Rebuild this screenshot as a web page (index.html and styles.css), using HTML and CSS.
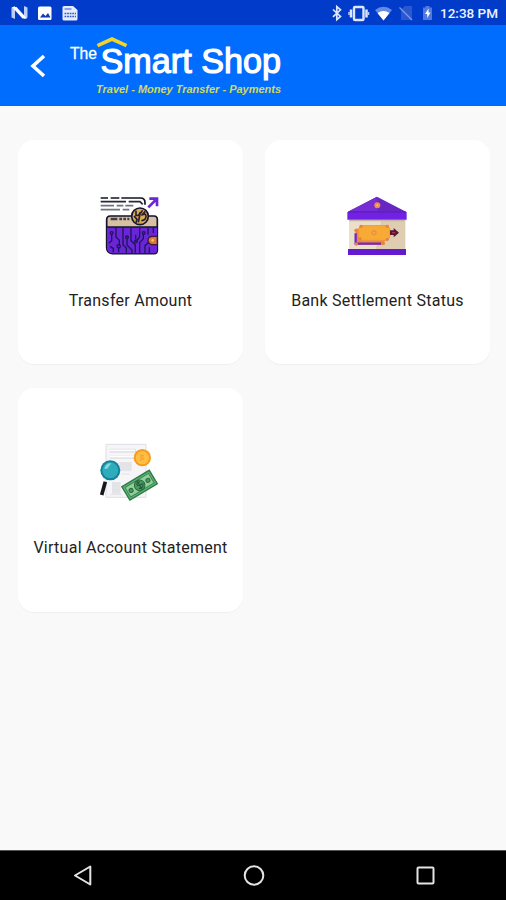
FILE: index.html
```html
<!DOCTYPE html>
<html lang="en">
<head>
<meta charset="utf-8">
<meta name="viewport" content="width=device-width, initial-scale=1">
<title>The Smart Shop</title>
<link rel="stylesheet" href="styles.css">
</head>
<body>
<div class="screen">
  <div class="status">
    <svg class="status-icons" width="80" height="25" viewBox="0 0 80 25">
      <path d="M11.500 7.500l3.500-1.500v13l-3.500-1.500zM24 6l3.500 1.500v10L24 19z" fill="#bccdf8"/>
      <path d="M12 7h4.500L27 18.500h-4.500z" fill="#fff"/>
      <rect x="38" y="6.500" width="13.500" height="13.500" rx="1.500" fill="#fff"/>
      <path d="M40 17.500l3-4 2.500 2.500 2.500-3 2.500 4.500z" fill="#123bb8"/>
      <path d="M64 6h9l4.500 4v9q0 1.500-1.500 1.500H64q-1.500 0-1.500-1.500V7.500Q62.500 6 64 6z" fill="#e4edff"/>
      <path d="M64.500 9h7" stroke="#3558c8" stroke-width="1"/>
      <path d="M64.500 13.500h11.500M64.500 16.500h11.500" stroke="#3558c8" stroke-width="1.500" stroke-dasharray="1.800 .8"/>
    </svg>
    <div class="status-right">
      <svg width="106" height="25" viewBox="330 0 106 25">
        <path d="M333 9.500l7.500 7-3.700 3.200V6.600l3.700 3.200-7.500 7" fill="none" stroke="#dce7ff" stroke-width="1.700"/>
        <rect x="354" y="7" width="9.500" height="13" rx="1" fill="none" stroke="#dce7ff" stroke-width="2.400"/>
        <path d="M351 9.500v8M366.500 9.500v8" stroke="#dce7ff" stroke-width="2.500"/>
        <path d="M349 12v3M368.500 12v3" stroke="#b6caff" stroke-width="1.500"/>
        <path d="M375 10q8.500-6.500 17 0l-8.500 10.500z" fill="#6689e4"/>
        <path d="M377.500 13q6-4 12 0l-6 7.500z" fill="#fff"/>
        <path d="M401 10l4-4h7v14h-11z" fill="#2c57d0"/>
        <path d="M399.500 7.500l12.500 12.500" stroke="#7b9ae6" stroke-width="1.300"/>
        <path d="M423 7.500h2.500V6h4v1.500h2.500V20h-9z" fill="#5379de"/>
        <path d="M428.500 8.500l-3.500 5.500h2.200v4l3.300-5.500h-2z" fill="#fff"/>
      </svg>
      <svg width="70" height="25" viewBox="436 0 70 25"><text class="clock" x="440" y="18" textLength="58" lengthAdjust="spacingAndGlyphs">12:38 PM</text></svg>
    </div>
  </div>
  <header class="header">
    <svg class="header-art" width="300" height="80" viewBox="0 26 300 80">
      <path d="M44 56L33 66l11 10" fill="none" stroke="#fff" stroke-width="3.600"/>
      <text class="logo-the" x="70" y="59" textLength="27" lengthAdjust="spacingAndGlyphs">The</text>
      <path d="M97.500 45.700L112 39l14.500 6.700" fill="none" stroke="#f2d526" stroke-width="3.600"/>
      <text class="logo-name" x="100.500" y="72.500" textLength="180.500" lengthAdjust="spacingAndGlyphs">Smart Shop</text>
      <text class="logo-tag" x="96" y="93" textLength="185" lengthAdjust="spacingAndGlyphs">Travel - Money Transfer - Payments</text>
    </svg>
  </header>
  <main class="grid">
    <div class="card">
      <svg class="icon" viewBox="0 0 240 240">
        <path d="M32 39h22M62 39h26M94 39h58q13 0 13 14v6" fill="none" stroke="#111522" stroke-width="5"/>
        <path d="M32 50h76M116 50h34l8 8" fill="none" stroke="#252a39" stroke-width="5"/>
        <path d="M32 62h40M80 62h20M106 62h24M32 74h58M98 74h20" stroke="#71757f" stroke-width="5"/>
        <path d="M175 67l25-25M178 41h23v23" fill="none" stroke="#6a27d8" stroke-width="8"/>
        <path d="M50 104q0-11 11-11h131q10 0 10 11v92q0 10-10 10H67q-17-2-17-18z" fill="#d8c1a3" stroke="#11132c" stroke-width="5"/>
        <path d="M51 126h150v70q0 9-9 9H67q-16-2-16-17z" fill="#6b24d6"/>
        <path d="M50 126h152" stroke="#11132c" stroke-width="5"/>
        <path d="M62 102h20M88 102h8M100 102h8M112 102h6" stroke="#454047" stroke-width="7"/>
        <g fill="none" stroke="#1d155d" stroke-width="4">
          <path d="M65 149v18l-9 8M78 128v28l10 10v17M99 128v51l10 10v14M111 160v20l15 15v9M123 128v39l13 12v24M137 149v13M149 129v26l-7 10M160 146v15l-11 12v31M174 128v21M165 204v-22l11-10v-6M178 204v-17M70 202v-12l-10-6M86 187v15M190 128v16"/>
          <circle cx="65" cy="144" r="4"/><circle cx="111" cy="157" r="4"/><circle cx="138" cy="169" r="4"/><circle cx="86" cy="184" r="5"/><circle cx="161" cy="144" r="4"/>
        </g>
        <circle cx="150" cy="94" r="25" fill="#d7ad55" stroke="#17152e" stroke-width="5"/>
        <path d="M138 77v14q10 3 13-10M145 112l5-25 8-11M154 91q14-9 14 3t-14 13M132 93l9 10-3 10M166 79l-9 10" fill="none" stroke="#2a1d30" stroke-width="5"/>
        <path d="M202 154h-17q-11 2-11 12t11 13h17z" fill="#d77b3c" stroke="#3a173b" stroke-width="4"/>
        <circle cx="188" cy="166" r="4" fill="#f8c45c"/>
      </svg>
      <div class="label"><span>Transfer Amount</span></div>
    </div>
    <div class="card">
      <svg class="icon" viewBox="0 0 240 240">
        <path d="M40 104h168v90H40z" fill="#decdb0"/>
        <path d="M40 104h96l-17 90H40z" fill="#ebdfc7"/>
        <path d="M123 35L210 80v8H36v-8z" fill="#6826c3"/>
        <path d="M123 35L40 78h84z" fill="#762ed4"/>
        <path d="M34 81h178v23H34z" fill="#7320e5"/>
        <path d="M36 81h174" stroke="#5a1eb4" stroke-width="3"/>
        <path d="M40 107h168" stroke="#c5b7a7" stroke-width="4"/>
        <circle cx="124" cy="61" r="9" fill="#ef8c50"/><circle cx="124" cy="61" r="3" fill="#ffbf56"/>
        <path d="M36 192h174v18H36z" fill="#641ad0"/>
        <path d="M58 131h16v33h72v16H58z" fill="#e78b42"/>
        <path d="M59 145v31h76" fill="none" stroke="#7128ca" stroke-width="7"/>
        <path d="M77 122h75l9 8v28l-9 8H77l-9-8v-28z" fill="#f8aa35" stroke="#ef963f" stroke-width="3"/>
        <circle cx="114" cy="143" r="8" fill="#eb943e"/><circle cx="114" cy="143" r="3" fill="#f8b44b"/>
        <g fill="#e98240"><circle cx="75" cy="124" r="5"/><circle cx="154" cy="124" r="5"/><circle cx="72" cy="161" r="5"/><circle cx="154" cy="163" r="5"/><circle cx="60" cy="136" r="5"/><circle cx="61" cy="177" r="5"/><circle cx="141" cy="175" r="5"/></g>
        <path d="M162 136h11v-7l16 14-16 14v-7h-11z" fill="#551633"/>
        <path d="M168 143h10" stroke="#a43645" stroke-width="4"/>
      </svg>
      <div class="label"><span>Bank Settlement Status</span></div>
    </div>
    <div class="card">
      <svg class="icon" viewBox="0 0 240 240">
        <path d="M48 37h120v159H48z" fill="#f6f6f8" stroke="#dedfe4" stroke-width="3"/>
        <path d="M59 50h79v12H59zM59 71h75v10H59zM88 90h37v24H88zM66 150h26v35H66z" fill="#e3e4e8"/>
        <path d="M59 55h76M59 74h74" stroke="#fff" stroke-width="4"/>
        <path d="M94 116h30M94 126h25M60 188h38" stroke="#d7d9df" stroke-width="2"/>
        <circle cx="157" cy="77" r="26" fill="#f59b23"/><circle cx="157" cy="77" r="20" fill="#ffbd42"/>
        <path d="M151 69l11 3M151 78l11 3M154 67l-2 20" fill="none" stroke="#f5a632" stroke-width="4"/>
        <path d="M46 149l-11 40" stroke="#17171e" stroke-width="11"/>
        <circle cx="61" cy="115" r="30" fill="#12839a"/>
        <circle cx="61" cy="115" r="24" fill="#2eacbb"/>
        <path d="M43 111q4-19 21-17l-12 16z" fill="#83d9dc"/>
        <g transform="rotate(-31 149 160)">
          <path d="M101 136h96v47h-96z" fill="#60b176" stroke="#2d7947" stroke-width="4"/>
          <path d="M108 143h82v33h-82z" fill="#93cf99" stroke="#3b8952" stroke-width="3"/>
          <circle cx="149" cy="160" r="16" fill="#4b9760" stroke="#28683f" stroke-width="3"/>
          <path d="M155 151q-12-4-12 3t11 6 0 9l-12-2M149 146v28" fill="none" stroke="#1d5c37" stroke-width="3"/>
          <circle cx="119" cy="160" r="6" fill="#4b9760" stroke="#276b40" stroke-width="3"/><circle cx="178" cy="160" r="6" fill="#4b9760" stroke="#276b40" stroke-width="3"/>
        </g>
      </svg>
      <div class="label"><span>Virtual Account Statement</span></div>
    </div>
  </main>
  <nav class="nav">
    <svg width="506" height="50" viewBox="0 850 506 50" fill="none" stroke="#e4e4e4" stroke-width="2">
      <path d="M75 875.500L90.300 866.500v18z" stroke-linejoin="round"/>
      <circle cx="254" cy="875.500" r="9.300"/>
      <rect x="417.500" y="867.500" width="16" height="16" rx="1"/>
    </svg>
  </nav>
</div>
</body>
</html>
```
FILE: styles.css
```css
* { box-sizing: border-box; }
body { margin: 0; font-family: Roboto, "Liberation Sans", sans-serif; }
svg { display: block; }
.screen { width: 506px; height: 900px; display: flex; flex-direction: column; background: #f9f9f9; overflow: hidden; }
.status { height: 25px; flex: none; display: flex; justify-content: space-between; background: #003bc9; }
.status-right { display: flex; }
.clock { font: 500 13.500px Roboto, sans-serif; fill: #eef3ff; }
.header { height: 81px; flex: none; padding-top: 1px; background: #006dff; border-bottom: 1px solid #1764dc; }
.logo-the { font: 17px "Liberation Sans", sans-serif; fill: #fff; stroke: #fff; stroke-width: .3px; }
.logo-name { font: 35px "Liberation Sans", sans-serif; fill: #fff; stroke: #fff; stroke-width: 1.2px; }
.logo-tag { font: italic bold 11px "Liberation Sans", sans-serif; fill: #d3da5c; }
.grid { flex: 1; display: grid; grid-template-columns: 225px 225px; grid-auto-rows: 224px; align-content: start; gap: 24px 22px; padding: 34px 16px 0 18px; }
.card { display: flex; flex-direction: column; align-items: center; padding-top: 45px; background: #fff; border-radius: 16px; box-shadow: 0 1px 1px rgba(0, 0, 0, .04); }
.card:nth-child(n + 3) { padding-top: 44px; }
.icon { width: 80px; height: 80px; flex: none; margin-right: 1px; }
.card:nth-child(2) .icon { margin-right: 3px; }
.label { margin-top: 26px; font-size: 16px; line-height: 20px; letter-spacing: .27px; color: #222; white-space: nowrap; }
.nav { height: 50px; flex: none; background: #000; border-top: 1px solid #555; }
.nav svg { margin-top: -1px; }
```
